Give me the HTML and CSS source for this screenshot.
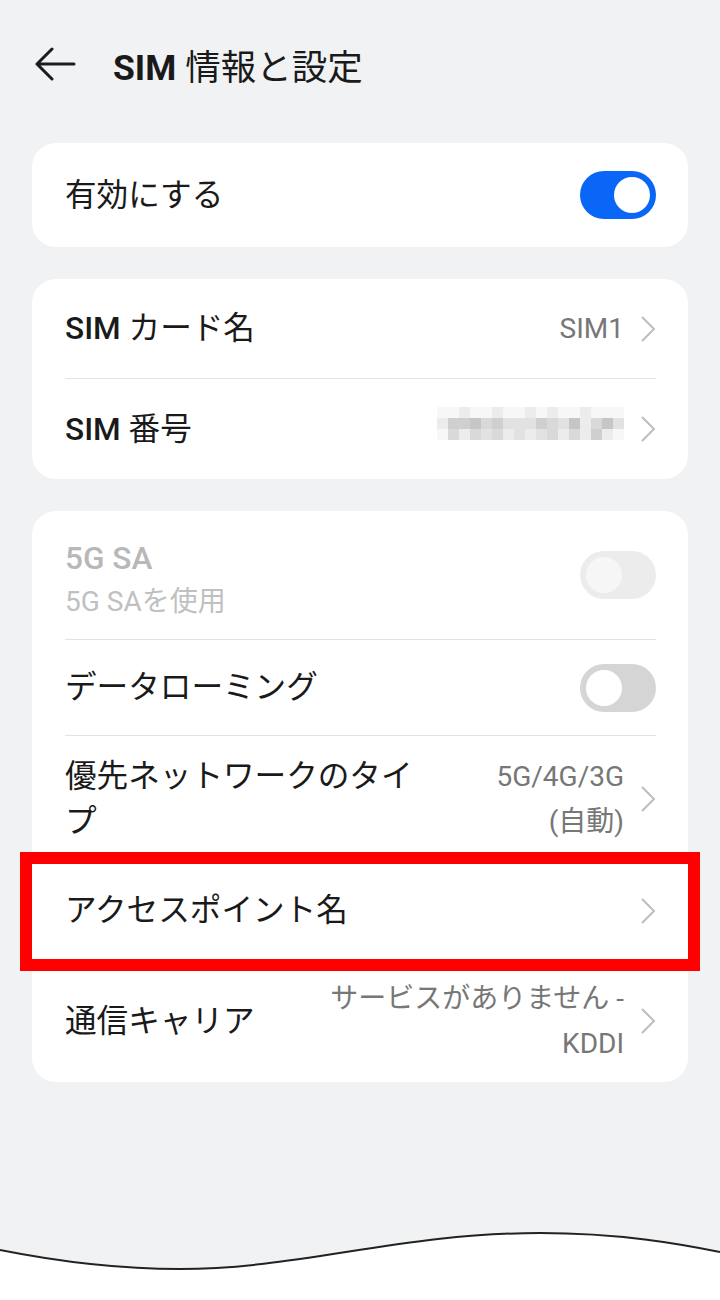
FILE: index.html
```html
<!DOCTYPE html>
<html lang="ja">
<head>
<meta charset="utf-8">
<title>SIM 情報と設定</title>
<link rel="stylesheet" href="styles.css">
</head>
<body>
<div class="page">
  <header class="header">
    <svg class="back" width="42" height="34" viewBox="0 0 42 34">
      <path d="M40 17 H3 M18 2 L3 17 L18 32" fill="none" stroke="#1c1c1c" stroke-width="3" stroke-linecap="round" stroke-linejoin="round"/>
    </svg>
    <h1 class="title"><span class="lat">SIM</span> 情報と設定</h1>
  </header>

  <main class="main">
    <section class="card">
      <div class="row h104 last">
        <div class="label">有効にする</div>
        <div class="toggle on"><span class="knob"></span></div>
      </div>
    </section>

    <section class="card">
      <div class="row h100">
        <div class="label"><span class="lat">SIM</span> カード名</div>
        <div class="right">
          <span class="value">SIM1</span>
          <svg class="chev" width="16" height="28" viewBox="0 0 16 28"><path d="M2 2 L14 14 L2 26" fill="none" stroke="#bdbdbd" stroke-width="2"/></svg>
        </div>
      </div>
      <div class="row h100 last">
        <div class="label"><span class="lat">SIM</span> 番号</div>
        <div class="right">
          <div class="pix">
            <i class="g0"></i><i class="g0"></i><i class="g1"></i><i class="g0"></i><i class="g0"></i><i class="g1"></i><i class="g0"></i><i class="g0"></i><i class="g1"></i><i class="g0"></i><i class="g1"></i><i class="g0"></i><i class="g0"></i><i class="g1"></i><i class="g0"></i><i class="g0"></i><i class="g0"></i>
            <i class="g1"></i><i class="g4"></i><i class="g4"></i><i class="g5"></i><i class="g3"></i><i class="g4"></i><i class="g2"></i><i class="g2"></i><i class="g2"></i><i class="g4"></i><i class="g3"></i><i class="g2"></i><i class="g5"></i><i class="g1"></i><i class="g3"></i><i class="g5"></i><i class="g2"></i>
            <i class="g0"></i><i class="g3"></i><i class="g1"></i><i class="g3"></i><i class="g2"></i><i class="g3"></i><i class="g1"></i><i class="g2"></i><i class="g1"></i><i class="g2"></i><i class="g3"></i><i class="g1"></i><i class="g3"></i><i class="g1"></i><i class="g4"></i><i class="g1"></i><i class="g0"></i>
          </div>
          <svg class="chev" width="16" height="28" viewBox="0 0 16 28"><path d="M2 2 L14 14 L2 26" fill="none" stroke="#bdbdbd" stroke-width="2"/></svg>
        </div>
      </div>
    </section>

    <section class="card">
      <div class="row h129">
        <div class="label-block">
          <div class="label disabled"><span class="lat">5G SA</span></div>
          <div class="sub">5G SAを使用</div>
        </div>
        <div class="toggle dis"><span class="knob"></span></div>
      </div>
      <div class="row h96">
        <div class="label">データローミング</div>
        <div class="toggle off"><span class="knob"></span></div>
      </div>
      <div class="row h126">
        <div class="label wrap">優先ネットワークのタイプ</div>
        <div class="right">
          <span class="value multi">5G/4G/3G<br>(自動)</span>
          <svg class="chev" width="16" height="28" viewBox="0 0 16 28"><path d="M2 2 L14 14 L2 26" fill="none" stroke="#bdbdbd" stroke-width="2"/></svg>
        </div>
      </div>
      <div class="row h98 highlighted">
        <div class="label">アクセスポイント名</div>
        <div class="right">
          <svg class="chev" width="16" height="28" viewBox="0 0 16 28"><path d="M2 2 L14 14 L2 26" fill="none" stroke="#bdbdbd" stroke-width="2"/></svg>
        </div>
        <div class="redbox"></div>
      </div>
      <div class="row h122 last">
        <div class="label">通信キャリア</div>
        <div class="right">
          <span class="value multi">サービスがありません -<br>KDDI</span>
          <svg class="chev" width="16" height="28" viewBox="0 0 16 28"><path d="M2 2 L14 14 L2 26" fill="none" stroke="#bdbdbd" stroke-width="2"/></svg>
        </div>
      </div>
    </section>
  </main>

  <svg class="tear" width="720" height="110" viewBox="0 1190 720 110" preserveAspectRatio="none">
    <path d="M0 1250 C60 1262 120 1269 180 1269 C300 1269 400 1233 540 1233 C620 1233 680 1244 720 1252 L720 1300 L0 1300 Z" fill="#ffffff"/>
    <path d="M0 1250 C60 1262 120 1269 180 1269 C300 1269 400 1233 540 1233 C620 1233 680 1244 720 1252" fill="none" stroke="#222222" stroke-width="2"/>
  </svg>
</div>
</body>
</html>
```

FILE: styles.css
```css
* { box-sizing: border-box; }

html, body {
  margin: 0;
  padding: 0;
}

body {
  background: #f1f2f4;
  font-family: Roboto, "Noto Sans CJK JP", sans-serif;
  color: #1a1a1a;
}

.page {
  position: relative;
  width: 720px;
  height: 1300px;
  overflow: hidden;
}

.header {
  height: 128px;
  display: flex;
  align-items: center;
  padding-left: 34px;
}

.back {
  display: block;
  flex: none;
}

.title {
  margin: 0 0 0 37px;
  font-size: 35.5px;
  font-weight: 400;
  color: #1a1a1a;
  letter-spacing: 0;
}

.title .lat { font-weight: 700; }

.main {
  padding: 15px 32px 0;
  display: flex;
  flex-direction: column;
  gap: 32px;
}

.card {
  background: #ffffff;
  border-radius: 24px;
}

.row {
  position: relative;
  margin: 0 32px 0 33px;
  display: flex;
  align-items: center;
  justify-content: space-between;
  border-bottom: 1px solid #e3e3e3;
}

.row.last { border-bottom: none; }

.h96 { height: 96px; }
.h98 { height: 98px; }
.h100 { height: 100px; }
.h104 { height: 104px; }
.h122 { height: 122px; }
.h126 { height: 126px; }
.h129 { height: 129px; }

.label {
  font-size: 31.6px;
  line-height: 45px;
  font-weight: 400;
  color: #1a1a1a;
}

.label .lat { font-weight: 500; }

.label.wrap {
  width: 370px;
  margin-top: 0;
}

.label.disabled {
  color: #b8b8b8;
}

.label-block {
  display: flex;
  flex-direction: column;
  margin-top: 9px;
}

.sub {
  font-size: 28px;
  line-height: 42px;
  color: #c0c0c0;
}

.right {
  display: flex;
  align-items: center;
  gap: 16px;
}

.value {
  font-size: 28px;
  line-height: 45px;
  color: #777777;
  text-align: right;
}

.chev {
  display: block;
  flex: none;
}

.toggle {
  position: relative;
  width: 76px;
  height: 48px;
  border-radius: 24px;
  flex: none;
}

.toggle .knob {
  position: absolute;
  top: 6px;
  width: 36px;
  height: 36px;
  border-radius: 50%;
  background: #ffffff;
}

.toggle.on { background: #0a66f6; }
.toggle.on .knob { right: 6px; }

.toggle.off { background: #d5d5d5; }
.toggle.off .knob { left: 6px; }

.toggle.dis { background: #ececec; }
.toggle.dis .knob { left: 6px; background: #f6f6f6; }

.pix {
  display: grid;
  grid-template-columns: repeat(17, 11px);
  grid-auto-rows: 11px;
  margin-top: -12px;
}

.pix i { display: block; }
.g0 { background: #f7f7f7; }
.g1 { background: #ececec; }
.g2 { background: #e2e2e2; }
.g3 { background: #d9d9d9; }
.g4 { background: #cfcfcf; }
.g5 { background: #c6c6c6; }

.redbox {
  position: absolute;
  left: -45px;
  right: -44px;
  top: -10px;
  bottom: -12px;
  border: 12px solid #ff0000;
  pointer-events: none;
}

.tear {
  position: absolute;
  left: 0;
  top: 1190px;
  display: block;
}
```
